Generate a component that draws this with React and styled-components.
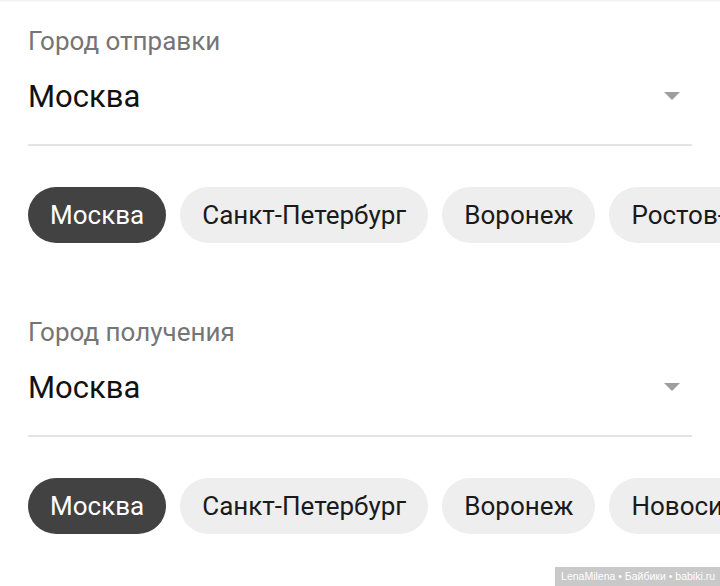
import React from 'react';
import styled, { createGlobalStyle } from 'styled-components';

const GlobalStyle = createGlobalStyle`
  html, body {
    margin: 0;
    padding: 0;
    background: #fff;
    font-family: Roboto, "Noto Sans", sans-serif;
  }
`;

const Screen = styled.div`
  position: relative;
  width: 720px;
  height: 586px;
  overflow: hidden;
  background: #fff;
  box-shadow: inset 0 3px 3px -2px rgba(0, 0, 0, 0.08);
`;

const Section = styled.div`
  padding: 25px 0 0 28px;
  height: 291px;
  box-sizing: border-box;
`;

const Label = styled.div`
  font-size: 26px;
  line-height: 32px;
  color: #757575;
`;

const Field = styled.div`
  display: flex;
  align-items: flex-start;
  justify-content: space-between;
  width: 664px;
  height: 89px;
  padding-top: 20px;
  border-bottom: 2px solid #e3e3e3;
  box-sizing: border-box;
`;

const Value = styled.div`
  font-size: 31px;
  color: #111;
  line-height: 40px;
`;

const Caret = styled.div`
  width: 0;
  height: 0;
  margin: 15px 12px 0 0;
  border-left: 8px solid transparent;
  border-right: 8px solid transparent;
  border-top: 8px solid #9e9e9e;
`;

const ChipRow = styled.div`
  display: flex;
  gap: 14px;
  margin-top: 41px;
  white-space: nowrap;
`;

const Chip = styled.div`
  flex: none;
  height: 56px;
  padding: 0 22px;
  border-radius: 28px;
  display: flex;
  align-items: center;
  font-size: 26px;
  background: ${p => (p.$active ? '#424242' : '#eeeeee')};
  color: ${p => (p.$active ? '#fff' : '#1a1a1a')};
`;

const Watermark = styled.div`
  position: absolute;
  right: 0;
  bottom: 0;
  height: 19px;
  padding: 0 5px 0 6px;
  background: #c9c9c9;
  color: #fff;
  font-family: "Liberation Sans", Arial, sans-serif;
  font-size: 10.5px;
  line-height: 19px;
`;

const CitySelect = ({ label, chips }) => (
  <Section>
    <Label>{label}</Label>
    <Field>
      <Value>Москва</Value>
      <Caret />
    </Field>
    <ChipRow>
      {chips.map((c, i) => (
        <Chip key={c} $active={i === 0}>{c}</Chip>
      ))}
    </ChipRow>
  </Section>
);

const App = () => (
  <Screen>
    <GlobalStyle />
    <CitySelect
      label="Город отправки"
      chips={['Москва', 'Санкт-Петербург', 'Воронеж', 'Ростов-на-Дону']}
    />
    <CitySelect
      label="Город получения"
      chips={['Москва', 'Санкт-Петербург', 'Воронеж', 'Новосибирск']}
    />
    <Watermark>LenaMilena • Байбики • babiki.ru</Watermark>
  </Screen>
);

export default App;
